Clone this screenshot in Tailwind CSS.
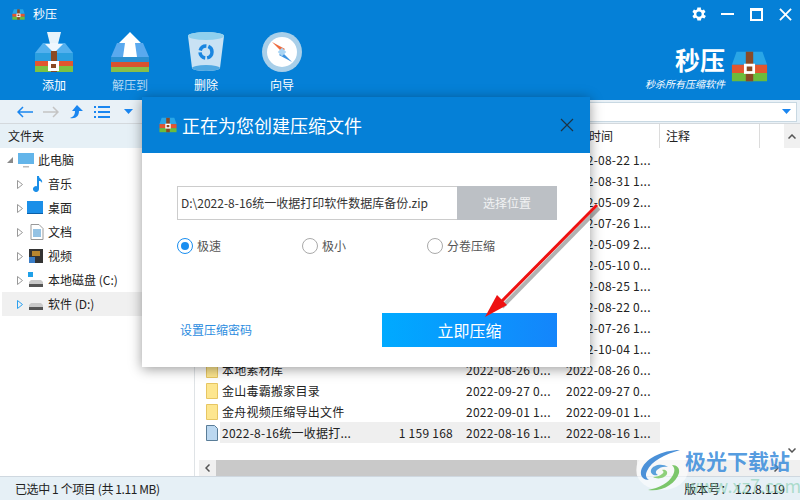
<!DOCTYPE html>
<html lang="zh-CN">
  <head>
    <meta charset="UTF-8" />
    <title>秒压</title>
    <script src="https://cdn.jsdelivr.net/npm/@tailwindcss/browser@4"></script>
  </head>
  <body class="font-['Noto_Sans_CJK_SC','Liberation_Sans',sans-serif] text-[12px] text-[#222] overflow-hidden">
    <svg class="hidden">
      <symbol id="chest" viewBox="0 0 40 40">
        <path d="M6 4h28l5 14H1z" fill="#2aa6e6" />
        <path d="M1 18h38v9H1z" fill="#e2562f" />
        <path d="M1 27h38v9H1z" fill="#6cbb3c" />
        <path d="M16 4h8v32h-8z" fill="#8a4a25" />
        <path d="M14 17h12v11H14z" fill="#fff" />
        <path d="M17 20h6v5h-6z" fill="#8a4a25" />
      </symbol>
      <symbol id="folder" viewBox="0 0 12 16">
        <path d="M.5.5h11v15H.5z" fill="#fde68f" stroke="#e7c663" />
      </symbol>
    </svg>

    <div class="relative w-[800px] h-[500px] flex flex-col bg-white overflow-hidden">
      <!-- header -->
      <header class="h-[100px] shrink-0 bg-[#0580d7] text-white flex flex-col">
        <div class="h-7 flex items-center pl-3 pr-2">
          <svg class="w-[13px] h-[13px]"><use href="#chest" /></svg>
          <span class="ml-[8px] text-[12px]">秒压</span>
          <div class="ml-auto flex items-center">
            <svg class="w-[18px] h-[18px]" viewBox="0 0 24 24" fill="#fff"><path d="M19.400 13a7.500 7.500 0 0 0 0-2l2.100-1.600-2-3.500-2.500 1a7.500 7.500 0 0 0-1.700-1L15.400 3.200h-4.800L10.200 5.900a7.500 7.500 0 0 0-1.700 1l-2.500-1-2 3.500L6.100 11a7.500 7.500 0 0 0 0 2l-2.100 1.600 2 3.500 2.500-1a7.500 7.500 0 0 0 1.700 1l.4 2.700h4.800l.4-2.700a7.500 7.500 0 0 0 1.700-1l2.500 1 2-3.500zM12.800 15.500a3.500 3.500 0 1 1 0-7 3.500 3.500 0 0 1 0 7z" transform="translate(-.8)" /></svg>
            <span class="ml-[13px] w-[13px] h-[2px] bg-white"></span>
            <span class="ml-[16px] w-[13px] h-[13px] border-2 border-t-[3px] border-white"></span>
            <svg class="ml-[16px] w-[13px] h-[13px]" viewBox="0 0 14 14" stroke="#fff" stroke-width="2"><path d="M1 1l12 12M13 1L1 13" /></svg>
          </div>
        </div>
        <div class="flex items-start pt-[3px] pl-[32px] pr-[32px]">
          <button class="w-[44px] flex flex-col items-center">
            <svg class="w-[42px] h-[42px]" viewBox="0 0 42 42">
              <path d="M2 22l8-10h22l8 10z" fill="#53b0ee" />
              <path d="M14 1h14l-3 12h5l-9 9-9-9h5z" fill="#fff" opacity=".9" />
              <path d="M2 22h38v19H2z" fill="#2a9fe0" />
              <path d="M2 30h38v5H2z" fill="#e2562f" />
              <path d="M2 35h38v6H2z" fill="#7cc242" />
              <path d="M18 20h6v21h-6z" fill="#8a4a25" />
              <path d="M15 30h11v10H15z" fill="#fff" />
              <path d="M18 33h5v4h-5z" fill="#8a4a25" />
            </svg>
            <span class="text-[12px] text-white mt-[2px] leading-[20px]">添加</span>
          </button>
          <button class="ml-[32px] w-[44px] flex flex-col items-center">
            <svg class="w-[42px] h-[42px]" viewBox="0 0 42 42">
              <path d="M2 26l6-14h26l6 14z" fill="#5aa9ee" />
              <path d="M21 1l11 11h-6l2 14H14l2-14h-6z" fill="#fff" />
              <path d="M2 26h38v6H2z" fill="#2a8fd0" />
              <path d="M2 31h38v5H2z" fill="#d9522e" />
              <path d="M2 36h38v5H2z" fill="#88bf48" />
            </svg>
            <span class="text-[12px] text-white/70 mt-[2px] leading-[20px]">解压到</span>
          </button>
          <button class="ml-[32px] w-[44px] flex flex-col items-center">
            <svg class="w-[42px] h-[42px]" viewBox="0 0 42 42">
              <path d="M3 5c0-5 36-5 36 0l-4 32c-1 4-27 4-28 0z" fill="#c9e2f4" />
              <ellipse cx="21" cy="5" rx="18" ry="4" fill="#8fd0ee" />
              <ellipse cx="21" cy="37" rx="14" ry="3" fill="#4fa8e2" />
              <circle cx="21" cy="21" r="6" fill="none" stroke="#1a86e0" stroke-width="3.500" stroke-dasharray="8 2" />
            </svg>
            <span class="text-[12px] text-white mt-[2px] leading-[20px]">删除</span>
          </button>
          <button class="ml-[32px] w-[44px] flex flex-col items-center">
            <svg class="w-[42px] h-[42px]" viewBox="0 0 42 42">
              <circle cx="21" cy="21" r="20" fill="#a9cfe9" />
              <circle cx="21" cy="21" r="15" fill="#fff" />
              <path d="M11 11l13 7-3 3z" fill="#ef6a3c" />
              <path d="M31 31L18 24l3-3z" fill="#3e93e0" />
              <path d="M18 18l6 0 0 6-6 0z" fill="#a8d4f4" transform="rotate(45 21 21)" />
            </svg>
            <span class="text-[12px] text-white mt-[2px] leading-[20px]">向导</span>
          </button>
          <div class="ml-auto mt-[15px] flex items-start">
            <div class="flex flex-col items-end mr-[6px]">
              <span class="text-[25px] font-bold leading-[27px]">秒压</span>
              <span class="text-[10px] leading-[13px] mt-[4px] italic">秒杀所有压缩软件</span>
            </div>
            <svg class="w-[37px] h-[37px] mt-[2px]"><use href="#chest" /></svg>
          </div>
        </div>
      </header>

      <!-- address bar -->
      <div class="h-6 shrink-0 bg-[#e9f1f7] flex items-center pl-[17px] pr-[3px] border-b border-[#d4d9dd]">
        <svg class="w-4 h-3" viewBox="0 0 16 12" fill="none" stroke="#1a86f0" stroke-width="1.500"><path d="M6 1L1 6l5 5M1 6h15" /></svg>
        <svg class="w-4 h-3 ml-[10px]" viewBox="0 0 16 12" fill="none" stroke="#c4c4c4" stroke-width="1.500"><path d="M10 1l5 5-5 5M15 6H0" /></svg>
        <svg class="w-4 h-4 ml-[9px]" viewBox="0 0 16 16" fill="#1a86f0"><path d="M9 1l6 6h-4c0 5-3 8-9 7 3-1 5-3 5-7H4z" /></svg>
        <svg class="w-4 h-3 ml-[10px]" viewBox="0 0 16 12" fill="#1a86f0"><path d="M0 0h2v2H0zM4 0h12v2H4zM0 5h2v2H0zM4 5h12v2H4zM0 10h2v2H0zM4 10h12v2H4z" /></svg>
        <svg class="w-[9px] h-[5px] ml-[14px]" viewBox="0 0 9 5" fill="#1a86f0"><path d="M0 0h9L4.500 5z" /></svg>
        <div class="ml-auto w-[300px] h-[20px] bg-white border border-[#c8d8e2] flex items-center justify-end pr-[5px]">
          <svg class="w-[9px] h-[5px]" viewBox="0 0 9 5" fill="#1a86f0"><path d="M0 0h9L4.500 5z" /></svg>
        </div>
      </div>

      <!-- body -->
      <div class="flex-1 flex min-h-0">
        <!-- tree -->
        <aside class="w-[195px] shrink-0 border-r border-[#dfe3e6] flex flex-col">
          <div class="h-6 bg-[#e6f0f6] flex items-center pl-2">文件夹</div>
          <div>
            <div class="h-6 flex items-center pl-[7px]">
              <svg class="w-[6px] h-[6px]" viewBox="0 0 6 6" fill="#8a8a8a"><path d="M6 0v6H0z" /></svg>
              <svg class="w-4 h-4 ml-[5px]" viewBox="0 0 16 16"><path d="M0 1h16v11H0z" fill="#63b5ea" /><path d="M5 14h6v1.500H5z" fill="#bbb" /></svg>
              <span class="ml-[4px]">此电脑</span>
            </div>
            <div class="h-6 flex items-center pl-[17px]">
              <svg class="w-[6px] h-[9px]" viewBox="0 0 6 9" fill="none" stroke="#999"><path d="M.5.500l5 4-5 4z" /></svg>
              <svg class="w-4 h-4 ml-[7px]" viewBox="0 0 16 16" fill="#1b8fe8"><path d="M7 0h2c0 3 4 3 3 7-1-2-2-2-3-2v8a3 3 0 1 1-2-2.800z" /></svg>
              <span class="ml-[2px]">音乐</span>
            </div>
            <div class="h-6 flex items-center pl-[17px]">
              <svg class="w-[6px] h-[9px]" viewBox="0 0 6 9" fill="none" stroke="#999"><path d="M.5.500l5 4-5 4z" /></svg>
              <svg class="w-4 h-4 ml-[4px]" viewBox="0 0 16 16"><path d="M0 1h16v13H0z" fill="#1b8fe8" /><path d="M0 13h16v1H0z" fill="#0a5fa8" /></svg>
              <span class="ml-[5px]">桌面</span>
            </div>
            <div class="h-6 flex items-center pl-[17px]">
              <svg class="w-[6px] h-[9px]" viewBox="0 0 6 9" fill="none" stroke="#999"><path d="M.5.500l5 4-5 4z" /></svg>
              <svg class="w-4 h-4 ml-[6px]" viewBox="0 0 16 16"><path d="M2 .5h8l4 4v11H2z" fill="#fff" stroke="#999" /><path d="M4 6h8M4 8h8M4 10h8M4 12h8" stroke="#2a86c8" /></svg>
              <span class="ml-[3px]">文档</span>
            </div>
            <div class="h-6 flex items-center pl-[17px]">
              <svg class="w-[6px] h-[9px]" viewBox="0 0 6 9" fill="none" stroke="#999"><path d="M.5.500l5 4-5 4z" /></svg>
              <svg class="w-4 h-4 ml-[5px]" viewBox="0 0 16 16"><path d="M1 1h14v14H1z" fill="#333" /><path d="M4 3h8v5H4z" fill="#b8862f" /><path d="M1 9h6v6H1z" fill="#3a7ec8" /></svg>
              <span class="ml-[4px]">视频</span>
            </div>
            <div class="h-6 flex items-center pl-[17px]">
              <svg class="w-[6px] h-[9px]" viewBox="0 0 6 9" fill="none" stroke="#999"><path d="M.5.500l5 4-5 4z" /></svg>
              <svg class="w-4 h-4 ml-[5px]" viewBox="0 0 16 16"><path d="M0 0h5v5H0z" fill="#1fa0e8" /><path d="M1 10l2-2h10l2 2v5H1z" fill="#c9c9c9" /><path d="M1 12h14v3H1z" fill="#555" /></svg>
              <span class="ml-[4px]">本地磁盘 (C:)</span>
            </div>
            <div class="h-6 flex items-center pl-[15px] ml-[2px] bg-[#f0f0f0]">
              <svg class="w-[6px] h-[9px]" viewBox="0 0 6 9" fill="none" stroke="#2aa0f0"><path d="M.5.500l5 4-5 4z" /></svg>
              <svg class="w-4 h-4 ml-[5px]" viewBox="0 0 16 16"><path d="M1 9l2-2h10l2 2v5H1z" fill="#c9c9c9" /><path d="M1 11h14v3H1z" fill="#555" /></svg>
              <span class="ml-[4px]">软件 (D:)</span>
            </div>
          </div>
        </aside>

        <!-- file list -->
        <main class="flex-1 min-w-0 flex flex-col">
          <div class="h-6 shrink-0 flex bg-white">
            <div class="w-[465px] border-r border-[#dcdcdc] flex items-center justify-end pr-[46px]">时间</div>
            <div class="w-[100px] border-r border-[#dcdcdc] flex items-center pl-[6px]">注释</div>
            <div class="flex-1"></div>
            <div class="w-4 bg-[#f0f0f0] flex items-center justify-center">
              <svg class="w-2 h-[5px]" viewBox="0 0 8 5" fill="none" stroke="#555" stroke-width="1.500"><path d="M.5 4.500L4 1l3.500 3.500" /></svg>
            </div>
          </div>
          <div class="flex-1 min-h-0 flex">
            <div class="flex-1 min-w-0 pl-[11px] pt-[1px] tracking-[0.25px]">
              <div class="h-[21px] flex pl-[360px] items-center">2022-08-22 1...</div>
              <div class="h-[21px] flex pl-[360px] items-center">2022-08-31 1...</div>
              <div class="h-[21px] flex pl-[360px] items-center">2022-05-09 2...</div>
              <div class="h-[21px] flex pl-[360px] items-center">2022-07-26 1...</div>
              <div class="h-[21px] flex pl-[360px] items-center">2022-05-09 2...</div>
              <div class="h-[21px] flex pl-[360px] items-center">2022-05-10 0...</div>
              <div class="h-[21px] flex pl-[360px] items-center">2022-08-25 1...</div>
              <div class="h-[21px] flex pl-[360px] items-center">2022-08-22 0...</div>
              <div class="h-[21px] flex pl-[360px] items-center">2022-07-26 1...</div>
              <div class="h-[21px] flex pl-[360px] items-center">2022-10-04 1...</div>
              <div class="h-[21px] flex items-center">
                <svg class="w-3 h-4"><use href="#folder" /></svg>
                <span class="ml-1 w-[244px]">本地素材库</span><span class="w-[100px]">2022-08-26 0...</span><span>2022-08-26 0...</span>
              </div>
              <div class="h-[21px] flex items-center">
                <svg class="w-3 h-4"><use href="#folder" /></svg>
                <span class="ml-1 w-[244px]">金山毒霸搬家目录</span><span class="w-[100px]">2022-09-27 0...</span><span>2022-09-27 0...</span>
              </div>
              <div class="h-[21px] flex items-center">
                <svg class="w-3 h-4"><use href="#folder" /></svg>
                <span class="ml-1 w-[244px]">金舟视频压缩导出文件</span><span class="w-[100px]">2022-09-01 1...</span><span>2022-09-01 1...</span>
              </div>
              <div class="h-[21px] flex items-center">
                <svg class="w-3 h-4" viewBox="0 0 12 16"><path d="M.5.5h8l3 3v12H.5z" fill="#bcd8f0" stroke="#5a7d98" /></svg>
                <div class="ml-[2px] flex items-center h-full w-[440px] bg-[#efefef] pl-[2px]">
                  <span class="w-[150px]">2022-8-16统一收据打...</span>
                  <span class="w-[81px] text-right">1 159 168</span>
                  <span class="ml-[13px] w-[100px]">2022-08-16 1...</span>
                  <span>2022-08-16 1...</span>
                </div>
              </div>
            </div>
            <div class="w-4 shrink-0 flex items-end justify-center pb-[7px]">
              <svg class="w-2 h-[5px]" viewBox="0 0 8 5" fill="none" stroke="#555" stroke-width="1.500"><path d="M.5.500L4 4 7.500.500" /></svg>
            </div>
          </div>
          <div class="h-[16px] shrink-0 flex pl-[4px]">
            <div class="w-[17px] bg-[#f0f0f0] flex items-center justify-center">
              <svg class="w-[5px] h-2" viewBox="0 0 5 8" fill="none" stroke="#555" stroke-width="1.500"><path d="M4.500.500L1 4l3.500 3.500" /></svg>
            </div>
            <div class="w-[421px] bg-[#c9c9c9]"></div>
            <div class="flex-1 bg-[#f0f0f0] flex items-center justify-end pr-[21px]">
              <svg class="w-[5px] h-2" viewBox="0 0 5 8" fill="none" stroke="#555" stroke-width="1.500"><path d="M.5.500L4 4 .5 7.500" /></svg>
            </div>
          </div>
        </main>
      </div>

      <!-- status bar -->
      <footer class="h-6 shrink-0 bg-[#e6f0f6] border-t border-[#cfd8e0] flex items-center justify-between pl-[15px] pr-[15px]">
        <span class="tracking-[-0.4px]">已选中 1 个项目 (共 1.11 MB)</span>
        <span>版本号： 1.2.8.119</span>
      </footer>

      <!-- dialog -->
      <div class="absolute left-[142px] top-[97px] w-[448px] h-[270px] bg-white shadow-[0_2px_12px_rgba(0,0,0,0.4)] flex flex-col">
        <div class="h-14 bg-[#0580d7] flex items-center pl-[17px] pr-[16px] text-white">
          <svg class="w-[18px] h-[18px]"><use href="#chest" /></svg>
          <span class="ml-[5px] text-[18px]">正在为您创建压缩文件</span>
          <svg class="ml-auto w-[14px] h-[14px]" viewBox="0 0 14 14" stroke="#1d3344" stroke-width="1.200"><path d="M1 1l12 12M13 1L1 13" /></svg>
        </div>
        <div class="flex-1 pl-[35px] pr-[33px] pt-[33px] flex flex-col">
          <div class="h-[34px] flex">
            <div class="w-[280px] border border-[#ccc] border-r-0 flex items-center pl-[3px] text-[#333]">D:\2022-8-16统一收据打印软件数据库备份.zip</div>
            <button class="flex-1 bg-[#bcc0c5] text-white/80 text-[12px]">选择位置</button>
          </div>
          <div class="mt-[16px] h-5 flex items-center text-[#555]">
            <div class="w-[125px] flex items-center">
              <span class="w-4 h-4 rounded-full border border-[#1a8ef0] flex items-center justify-center"><span class="w-2 h-2 rounded-full bg-[#1a8ef0]"></span></span>
              <span class="ml-[4px]">极速</span>
            </div>
            <div class="w-[125px] flex items-center">
              <span class="w-4 h-4 rounded-full border border-[#aaa]"></span>
              <span class="ml-[4px]">极小</span>
            </div>
            <div class="flex items-center">
              <span class="w-4 h-4 rounded-full border border-[#aaa]"></span>
              <span class="ml-[4px]">分卷压缩</span>
            </div>
          </div>
          <div class="mt-auto mb-[20px] flex items-center justify-between pl-[3px]">
            <a class="text-[#2b8ce0]">设置压缩密码</a>
            <button class="w-[175px] h-[34px] text-white text-[16px] bg-gradient-to-r from-[#00aaff] to-[#1485fb]">立即压缩</button>
          </div>
        </div>
      </div>

      <!-- red annotation arrow -->
      <svg class="absolute inset-0 pointer-events-none" width="800" height="500" viewBox="0 0 800 500">
        <path d="M598 206L501 305" stroke="#000" stroke-opacity=".3" stroke-width="4" transform="translate(1 2)" />
        <path d="M597 205L500 303" stroke="#ee1111" stroke-width="3" />
        <path d="M485 317L497 295 507 305z" fill="#ee1111" />
      </svg>

      <!-- watermark -->
      <svg class="absolute left-[636px] top-[447px] pointer-events-none" width="54" height="46" viewBox="0 0 54 46">
        <ellipse cx="26" cy="23" rx="26" ry="20" fill="#fff" fill-opacity=".55" />
        <path d="M44 3C26 3 8 12 5 24c-1 6 3 9 8 9-3-2-4-5-2-9C15 14 30 7 44 3z" fill="#4a90d8" />
        <path d="M12 43c14 2 28-6 31-17 1-5-2-8-7-8 3 3 3 6 1 10-4 8-14 13-25 15z" fill="#7cc66a" />
        <path d="M32 20c-6-4-15-2-17 3-1 4 3 6 7 5-2-1-3-3-1-5 3-3 7-4 11-3z" fill="#5aa0dc" />
        <path d="M17 30c5 3 12 1 14-3 1-3-2-5-5-4 2 1 2 3 0 4-2 2-6 3-9 3z" fill="#8ed07a" />
      </svg>
      <div class="absolute left-[685px] top-[447px] flex flex-col pointer-events-none">
        <span class="text-[21px] font-bold leading-[26px] text-[#3f8fdc]/90">极光下载站</span>
        <span class="text-[18px] leading-[22px] mt-[1px] text-[#6fc6a0]/50">www.xz7.com</span>
      </div>
    </div>
  </body>
</html>
